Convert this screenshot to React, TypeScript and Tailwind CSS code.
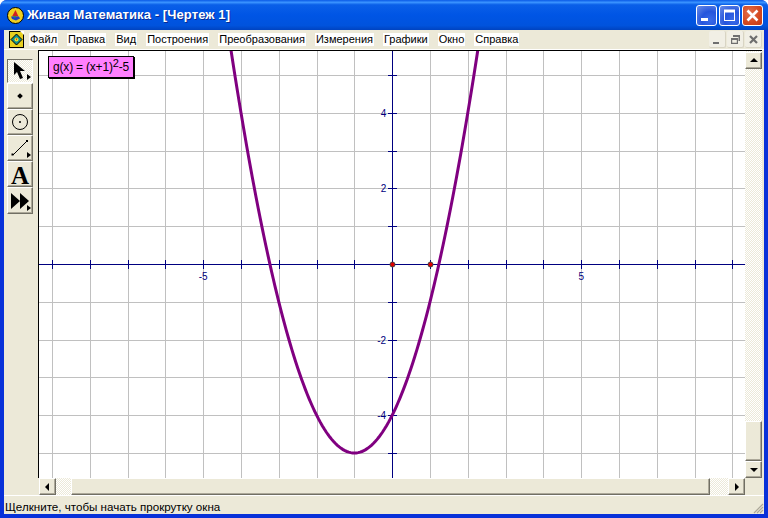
const U = 37.8;
const OX = 353.2; // origin inside canvas (page 392.2 minus 39)
const OY = 213;
const W = 706;
const H = 427;
const MENU = ["Файл", "Правка", "Вид", "Построения", "Преобразования", "Измерения", "Графики", "Окно", "Справка"];
const range = (a: number, b: number) => Array.from({ length: b - a + 1 }, (_, i) => a + i);

function Graph() {
  const pts: string[] = [];
  for (let x = -5; x <= 3; x += 0.05) {
    pts.push(`${(OX + x * U).toFixed(2)},${(OY - ((x + 1) * (x + 1) - 5) * U).toFixed(2)}`);
  }
  const xs = range(-9, 9);
  const ys = range(-5, 5);
  const labels: [number, number, string][] = [
    [OX - 5 * U, OY + 16, "-5"],
    [OX + 5 * U, OY + 16, "5"],
  ];
  const yLabels: [number, string][] = [[4, "4"], [2, "2"], [-2, "-2"], [-4, "-4"]];
  return (
    <svg width={W} height={H} viewBox={`0 0 ${W} ${H}`} className="block">
      {xs.map((i) => (
        <line key={i} x1={Math.round(OX + i * U) + 0.5} x2={Math.round(OX + i * U) + 0.5} y1={0} y2={H} stroke="#c0c0c0" />
      ))}
      {ys.map((i) => (
        <line key={i} y1={Math.round(OY - i * U) + 0.5} y2={Math.round(OY - i * U) + 0.5} x1={0} x2={W} stroke="#c0c0c0" />
      ))}
      <line x1={0} x2={W} y1={Math.round(OY) + 0.5} y2={Math.round(OY) + 0.5} stroke="#000080" />
      <line y1={0} y2={H} x1={Math.round(OX) + 0.5} x2={Math.round(OX) + 0.5} stroke="#000080" />
      {xs.map((i) => (
        <line key={i} x1={Math.round(OX + i * U) + 0.5} x2={Math.round(OX + i * U) + 0.5} y1={Math.round(OY) - 4} y2={Math.round(OY) + 5} stroke="#000080" />
      ))}
      {ys.map((i) => (
        <line key={i} y1={Math.round(OY - i * U) + 0.5} y2={Math.round(OY - i * U) + 0.5} x1={Math.round(OX) - 4} x2={Math.round(OX) + 5} stroke="#000080" />
      ))}
      {labels.map(([x, y, t]) => (
        <text key={t} x={x} y={y} textAnchor="middle" fontSize="10" fontFamily="Liberation Sans, sans-serif" fill="#000080">{t}</text>
      ))}
      {yLabels.map(([v, t]) => (
        <text key={t} x={OX - 6} y={OY - v * U + 4} textAnchor="end" fontSize="10" fontFamily="Liberation Sans, sans-serif" fill="#000080">{t}</text>
      ))}
      <polyline points={pts.join(" ")} fill="none" stroke="#800080" strokeWidth="3" />
      <circle cx={Math.round(OX) + 0.5} cy={Math.round(OY) + 0.5} r="2.5" fill="#e00000" stroke="#404040" strokeWidth="1" />
      <circle cx={Math.round(OX + U) + 0.5} cy={Math.round(OY) + 0.5} r="2.5" fill="#e00000" stroke="#404040" strokeWidth="1" />
    </svg>
  );
}

const bevel = "border-t border-l border-t-white border-l-white border-r border-b border-r-[#716f64] border-b-[#716f64] shadow-[inset_-1px_-1px_0_#aca899]";
const dither = "bg-[repeating-conic-gradient(#ece9d8_0_25%,#ffffff_0_50%)] bg-[length:2px_2px]";

function ToolBtn({ children, pressed, h = "h-[26px]" }: { children: React.ReactNode; pressed?: boolean; h?: string }) {
  return (
    <div className={`relative w-[26px] ${h} flex items-center justify-center ${pressed ? "border-t border-l border-t-[#716f64] border-l-[#716f64] border-r-white border-b-white border-r border-b " + dither : bevel + " bg-[#ece9d8]"}`}>
      {children}
    </div>
  );
}

function Corner() {
  return <svg width="4" height="6" viewBox="0 0 4 6" className="absolute right-[1px] bottom-[2px]"><path d="M0 0 L4 3 L0 6Z" fill="#000" /></svg>;
}

function ScrollBtn({ dir }: { dir: "u" | "d" | "l" | "r" }) {
  const d = { u: "M0 5 L4 1 L8 5Z", d: "M0 2 L8 2 L4 6Z", l: "M5 0 L5 8 L1 4Z", r: "M2 0 L2 8 L6 4Z" }[dir];
  return (
    <div className={`w-[17px] h-[17px] shrink-0 flex items-center justify-center bg-[#ece9d8] ${bevel}`}>
      <svg width="8" height="8" viewBox="0 0 8 8"><path d={d} fill="#000" /></svg>
    </div>
  );
}

function WinBtn({ kind }: { kind: "min" | "max" | "close" }) {
  const bg =
    kind === "close"
      ? "bg-[radial-gradient(circle_at_35%_35%,#e2704c,#d4481f_60%,#c23a18)]"
      : "bg-[radial-gradient(circle_at_70%_75%,#3a6be8,#2555dc_45%,#6d8fe8_100%)]";
  return (
    <div className={`w-[21px] h-[21px] rounded-[3px] border border-white flex items-center justify-center ${bg}`}>
      <svg width="15" height="15" viewBox="0 0 15 15">
        {kind === "min" && <rect x="2" y="10" width="7" height="3" fill="#fff" />}
        {kind === "max" && <path d="M2 1.5h11v11.5H2z M3 4.5v7.5h9V4.5z" fill="#fff" fillRule="evenodd" />}
        {kind === "close" && <path d="M2.5 2.5 L12.5 12.5 M12.5 2.5 L2.5 12.5" stroke="#fff" strokeWidth="2.6" />}
      </svg>
    </div>
  );
}

function MdiBtn({ kind }: { kind: "min" | "restore" | "close" }) {
  return (
    <div className="w-[17px] h-[17px] rounded-[2px] flex items-center justify-center bg-[#f1efe5] border-r border-b border-r-[#d8d4c4] border-b-[#d8d4c4]">
      <svg width="11" height="11" viewBox="0 0 11 11">
        {kind === "min" && <rect x="1" y="8" width="6" height="2" fill="#6f6f6f" />}
        {kind === "restore" && <path d="M3 1h7v6H8.5V3H3z M1 4h7v6H1z M2.2 6v2.8h4.6V6z" fill="#6f6f6f" fillRule="evenodd" />}
        {kind === "close" && <path d="M2 2 L9 9 M9 2 L2 9" stroke="#6f6f6f" strokeWidth="2.2" />}
      </svg>
    </div>
  );
}

export default function App() {
  return (
    <div className="w-[768px] h-[518px] flex flex-col overflow-hidden bg-[#0831d9] rounded-t-[7px] font-['Liberation_Sans',sans-serif]">
      {/* Title bar */}
      <div className="h-[30px] shrink-0 flex items-center pl-[7px] pr-[5px] bg-[linear-gradient(180deg,#0a5ae6_0%,#3a93ff_8%,#0a5fe8_16%,#0055e5_50%,#0053dd_85%,#0043c0_100%)]">
        <svg width="17" height="17" viewBox="0 0 17 17" className="shrink-0">
          <circle cx="8.5" cy="8.5" r="8" fill="#f0d020" stroke="#000" strokeWidth="1" />
          <path d="M8.5 3 L11.5 9.5 L5 9.5Z" fill="#d02020" />
          <path d="M4 9.5 L12 9.5 L13 11.5 L9 13.5 L5 12Z" fill="#2040c0" />
          <path d="M6 9 L9 9 L8 11Z" fill="#20a040" />
        </svg>
        <span className="ml-[3px] text-white font-bold text-[13px] tracking-[0.1px] whitespace-nowrap [text-shadow:1px_1px_0_#0a2a90]">
          Живая Математика - [Чертеж 1]
        </span>
        <div className="ml-auto flex gap-[2px]">
          <WinBtn kind="min" />
          <WinBtn kind="max" />
          <WinBtn kind="close" />
        </div>
      </div>

      {/* Window body */}
      <div className="flex-1 mx-[4px] mb-[4px] flex flex-col bg-[#ece9d8] min-h-0">
        {/* Menu bar */}
        <div className="h-[19px] shrink-0 flex items-center pl-[5px] pr-[2px] border-b border-b-white box-content">
          <svg width="15" height="17" viewBox="0 0 15 17" className="shrink-0">
            <rect x="0.5" y="0.5" width="14" height="16" fill="#e8d020" stroke="#000" />
            <path d="M11 0 L15 0 L15 4 Z" fill="#fff" />
            <path d="M7.5 3 L13 8.5 L7.5 14 L2 8.5Z" fill="#109090" stroke="#000" />
            <circle cx="7.5" cy="8.5" r="2" fill="#f0f020" />
            <path d="M6.5 7.5 L8.5 7.5 L7.5 9.5Z" fill="#d02020" />
          </svg>
          <div className="flex ml-[5px] gap-[9px] text-[11px] text-black">
            {MENU.map((m) => (
              <span key={m} className="bg-white h-[13px] leading-[13px] whitespace-nowrap px-[1px]">{m}</span>
            ))}
          </div>
          <div className="ml-auto flex gap-[1px]">
            <MdiBtn kind="min" />
            <MdiBtn kind="restore" />
            <MdiBtn kind="close" />
          </div>
        </div>

        {/* Main area */}
        <div className="flex-1 flex min-h-0">
          <div className="w-[34px] shrink-0 flex flex-col pl-[3px] pt-[9px]">
            <ToolBtn pressed h="h-[24px]">
              <svg width="14" height="18" viewBox="0 0 14 18"><path d="M1 0 L1 13 L4 10 L7 17 L10 16 L7 9 L12 9Z" fill="#000" /></svg>
              <Corner />
            </ToolBtn>
            <ToolBtn><div className="w-[4px] h-[4px] rotate-45 bg-black" /></ToolBtn>
            <ToolBtn>
              <svg width="18" height="18" viewBox="0 0 18 18"><circle cx="9" cy="9" r="7.5" fill="none" stroke="#000" /><circle cx="9" cy="9" r="1" fill="#000" /></svg>
            </ToolBtn>
            <ToolBtn>
              <svg width="20" height="20" viewBox="0 0 20 20"><path d="M3 17 L17 3" stroke="#000" /><rect x="1.5" y="15.5" width="2" height="2" fill="#000" /><rect x="16" y="2" width="2" height="2" fill="#000" /></svg>
              <Corner />
            </ToolBtn>
            <ToolBtn><span className="font-['Liberation_Serif',serif] font-bold text-[25px] leading-none pt-[3px]">A</span></ToolBtn>
            <ToolBtn h="h-[27px]">
              <svg width="18" height="16" viewBox="0 0 18 16"><path d="M0 0 L9 8 L0 16Z M9 0 L18 8 L9 16Z" fill="#000" /></svg>
              <Corner />
            </ToolBtn>
          </div>

          <div className="flex-1 flex flex-col min-w-0">
            <div className="flex-1 flex min-h-0 border-t border-t-black">
              <div className="relative flex-1 min-w-0 bg-white border-l border-l-black overflow-hidden">
                <Graph />
                <div className="absolute left-[9px] top-[5px] w-[86px] h-[22px] bg-[#ff80ff] border border-black flex items-center justify-center text-[12px] tracking-[-0.2px] text-black whitespace-nowrap shadow-[1px_1px_0_#000]">
                  g(x) = (x+1)<sup className="text-[11px] leading-none -top-[4px]">2</sup>-5
                </div>
              </div>
              <div className={`w-[17px] shrink-0 flex flex-col ${dither}`}>
                <div className="mt-[1px]"><ScrollBtn dir="u" /></div>
                <div className="flex-1" />
                <div className={`h-[40px] shrink-0 bg-[#ece9d8] ${bevel}`} />
                <ScrollBtn dir="d" />
              </div>
            </div>
            <div className="h-[17px] shrink-0 flex pr-[17px]">
              <div className="ml-[1px]"><ScrollBtn dir="l" /></div>
              <div className={`w-[15px] shrink-0 ${dither}`} />
              <div className={`flex-1 bg-[#ece9d8] ${bevel}`} />
              <div className={`w-[18px] shrink-0 ${dither}`} />
              <ScrollBtn dir="r" />
            </div>
          </div>
          <div className="w-[2px] shrink-0" />
        </div>

        {/* Status bar */}
        <div className="relative h-[19px] shrink-0 flex items-center pl-[1px] pt-[3px] border-t border-t-white text-[11.6px] text-black">
          Щелкните, чтобы начать прокрутку окна
          <svg width="12" height="12" viewBox="0 0 12 12" className="absolute right-0 bottom-0">
            <path d="M11 2 L2 11 M11 5 L5 11 M11 8 L8 11" stroke="#aca899" strokeWidth="1.2" />
          </svg>
        </div>
      </div>
    </div>
  );
}
